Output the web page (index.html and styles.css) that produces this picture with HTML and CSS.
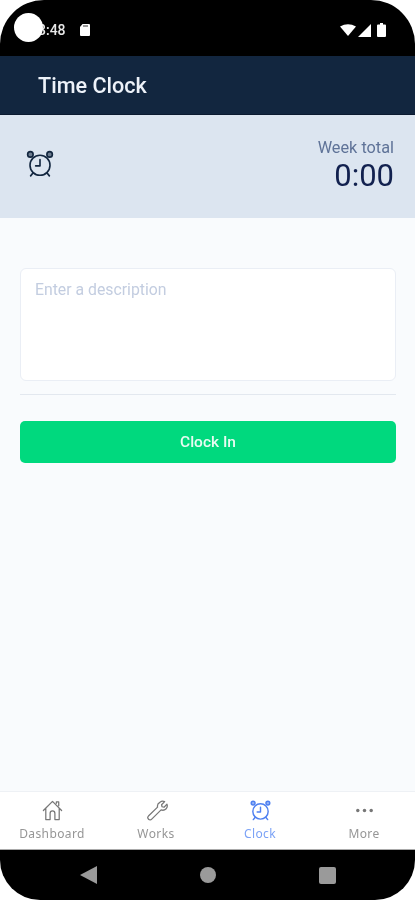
FILE: index.html
```html
<!DOCTYPE html>
<html lang="en">
<head>
<meta charset="utf-8">
<title>Time Clock</title>
<link rel="stylesheet" href="styles.css">
</head>
<body>
<div class="screen">
  <div class="status-bar">
    <div class="status-left">
      <span class="status-time">3:48</span>
      <svg class="sim" width="12" height="14" viewBox="0 0 12 14"><path d="M3.5 1H10a1 1 0 0 1 1 1v10a1 1 0 0 1-1 1H2a1 1 0 0 1-1-1V4z" fill="#fff"/><path d="M4 3h5" stroke="#000" stroke-width=".8"/></svg>
    </div>
    <div class="status-right">
      <svg width="16" height="12" viewBox="0 0 16 12"><path d="M0 2.500Q8-2 16 2.500L8 12z" fill="#fff"/></svg>
      <svg class="signal" width="13" height="13" viewBox="0 0 13 13"><path d="M0 13 13 0v13z" fill="#fff"/></svg>
      <svg class="battery" width="9" height="14" viewBox="0 0 9 14"><path d="M3 0h3v1.500h2a1 1 0 0 1 1 1V13a1 1 0 0 1-1 1H1a1 1 0 0 1-1-1V2.500a1 1 0 0 1 1-1h2z" fill="#fff"/></svg>
    </div>
    <span class="camera-dot"></span>
  </div>

  <header class="app-bar"><h1 class="app-title">Time Clock</h1></header>

  <section class="summary">
    <svg class="summary-icon" width="30" height="30" viewBox="0 0 24 24" fill="none" stroke="#12263f" stroke-width="1.300" stroke-linecap="round" stroke-linejoin="round">
      <circle cx="12" cy="13" r="8"/>
      <path d="M12 8.500V13.500H8.500"/>
      <circle cx="4.300" cy="4.300" r="2.200" fill="#12263f" fill-opacity=".55"/>
      <circle cx="19.700" cy="4.300" r="2.200" fill="#12263f" fill-opacity=".55"/>
      <path d="M6.500 19 4.500 21.500M17.500 19l2 2.500"/>
    </svg>
    <div class="week">
      <div class="week-label">Week total</div>
      <div class="week-value">0:00</div>
    </div>
  </section>

  <main class="content">
    <div class="description"><span class="placeholder">Enter a description</span></div>
    <hr class="divider">
    <button class="clock-btn" type="button">Clock In</button>
  </main>

  <nav class="tabs">
    <div class="tab">
      <svg width="24" height="24" viewBox="0 0 24 24" fill="none" stroke="#777" stroke-width="1.300" stroke-linejoin="round" stroke-linecap="round"><path d="M2.500 12 12 2.500 21.500 12M5 10v11.500h4.500V15a2.500 2.500 0 0 1 5 0v6.500H19V10M16 4.500V3h2.500v4"/></svg>
      <span class="tab-label">Dashboard</span>
    </div>
    <div class="tab">
      <svg width="24" height="24" viewBox="0 0 24 24" fill="none" stroke="#777" stroke-width="1.300" stroke-linejoin="round"><path d="M15.500 3.500a4.600 4.600 0 0 1 5-.8L17.300 6l.5 2.100 2.100.5 3-3.200a4.600 4.600 0 0 1-6.100 5.900L7 21a2.300 2.300 0 0 1-3.400-3.200l9.500-9.300a4.600 4.600 0 0 1 2.400-5z"/></svg>
      <span class="tab-label">Works</span>
    </div>
    <div class="tab tab-active">
      <svg width="24" height="24" viewBox="0 0 24 24" fill="none" stroke="#4f80f0" stroke-width="1.500" stroke-linecap="round" stroke-linejoin="round">
        <circle cx="12" cy="13" r="8"/>
        <path d="M12 8.500V13.500H8.500"/>
        <circle cx="4.300" cy="4.300" r="2" fill="#4f80f0" fill-opacity=".6"/>
        <circle cx="19.700" cy="4.300" r="2" fill="#4f80f0" fill-opacity=".6"/>
        <path d="M6.500 19 4.500 21.500M17.500 19l2 2.500"/>
      </svg>
      <span class="tab-label">Clock</span>
    </div>
    <div class="tab">
      <svg width="24" height="24" viewBox="0 0 24 24" fill="#777"><circle cx="5" cy="12" r="1.800"/><circle cx="12" cy="12" r="1.800"/><circle cx="19" cy="12" r="1.800"/></svg>
      <span class="tab-label">More</span>
    </div>
  </nav>

  <div class="nav-bar">
    <svg width="17" height="18" viewBox="0 0 17 18"><path d="M17 0v18L0 9z" fill="#9a9a9a"/></svg>
    <span class="nav-home"></span>
    <span class="nav-recent"></span>
  </div>
</div>
</body>
</html>
```

FILE: styles.css
```css
* { box-sizing: border-box; }
html, body { margin: 0; padding: 0; background: #fff; }
body { font-family: Roboto, "Liberation Sans", sans-serif; }

.screen {
  width: 415px;
  height: 900px;
  display: flex;
  flex-direction: column;
  overflow: hidden;
  background: #fff;
  filter: blur(0.5px);
}

.status-bar {
  position: relative;
  flex: 0 0 56px;
  background: #000;
  border-radius: 44px 44px 0 0;
  display: flex;
  align-items: center;
  justify-content: space-between;
  padding: 4px 29px 0 38px;
}
.status-left { display: flex; align-items: center; gap: 13px; }
.status-time { color: #e8e8e8; font-size: 14px; font-weight: 500; }
.status-right { display: flex; align-items: center; gap: 2px; }
.battery { margin-left: 4px; }
.camera-dot {
  position: absolute;
  left: 14px;
  top: 13px;
  width: 29px;
  height: 29px;
  border-radius: 50%;
  background: #fff;
}

.app-bar {
  flex: 0 0 59px;
  background: #12263f;
  border-bottom: 1px solid #0b1a30;
  display: flex;
  align-items: center;
  padding: 0 38px;
}
.app-title {
  margin: 0;
  color: #edf2f9;
  font-size: 21.600px;
  font-weight: 500;
}

.summary {
  flex: 0 0 103px;
  background: #dce5f0;
  display: flex;
  align-items: center;
  justify-content: space-between;
  padding: 0 21px 0 25px;
}
.summary-icon { margin-bottom: 6px; }
.week { text-align: right; margin-bottom: 2px; }
.week-label { color: #5f7398; font-size: 16.300px; line-height: 20px; }
.week-value { color: #12214f; font-size: 31px; line-height: 36px; }

.content {
  flex: 1;
  background: #f9fbfd;
  padding: 50px 19px 0 20px;
}
.description {
  height: 113px;
  background: #fff;
  border: 1px solid #eaeef5;
  border-radius: 6px;
  padding: 11px 14px;
}
.placeholder { color: #c3cde0; font-size: 15.800px; }
.divider {
  margin: 13px 0 0;
  border: 0;
  height: 1px;
  background: #e3e8ef;
}
.clock-btn {
  display: block;
  width: 100%;
  height: 42px;
  margin-top: 26px;
  border: 0;
  border-radius: 5px;
  background: #00d97e;
  color: #e8fbf2;
  font-family: inherit;
  font-size: 15.500px;
  font-weight: 500;
}

.tabs {
  flex: 0 0 59px;
  background: #fff;
  border-top: 1px solid #eef1f5;
  border-bottom: 1px solid #aaa;
  display: grid;
  grid-template-columns: repeat(4, 104px);
  padding-top: 7px;
}
.tab {
  display: flex;
  flex-direction: column;
  align-items: center;
  gap: 4px;
}
.tab svg { width: 23px; height: 23px; }
.tab-label {
  color: #969696;
  font-family: "Noto Sans", Roboto, sans-serif;
  font-size: 12px;
  line-height: 15px;
  letter-spacing: .4px;
}
.tab-active .tab-label { color: #7ba2f6; }

.nav-bar {
  flex: 0 0 50px;
  background: #000;
  border-radius: 0 0 40px 40px;
  display: grid;
  grid-template-columns: 17px 16px 17px;
  justify-content: center;
  column-gap: 103px;
  align-items: center;
}
.nav-home { width: 16px; height: 16px; border-radius: 50%; background: #9a9a9a; }
.nav-recent { width: 17px; height: 17px; border-radius: 2px; background: #9a9a9a; }
```
